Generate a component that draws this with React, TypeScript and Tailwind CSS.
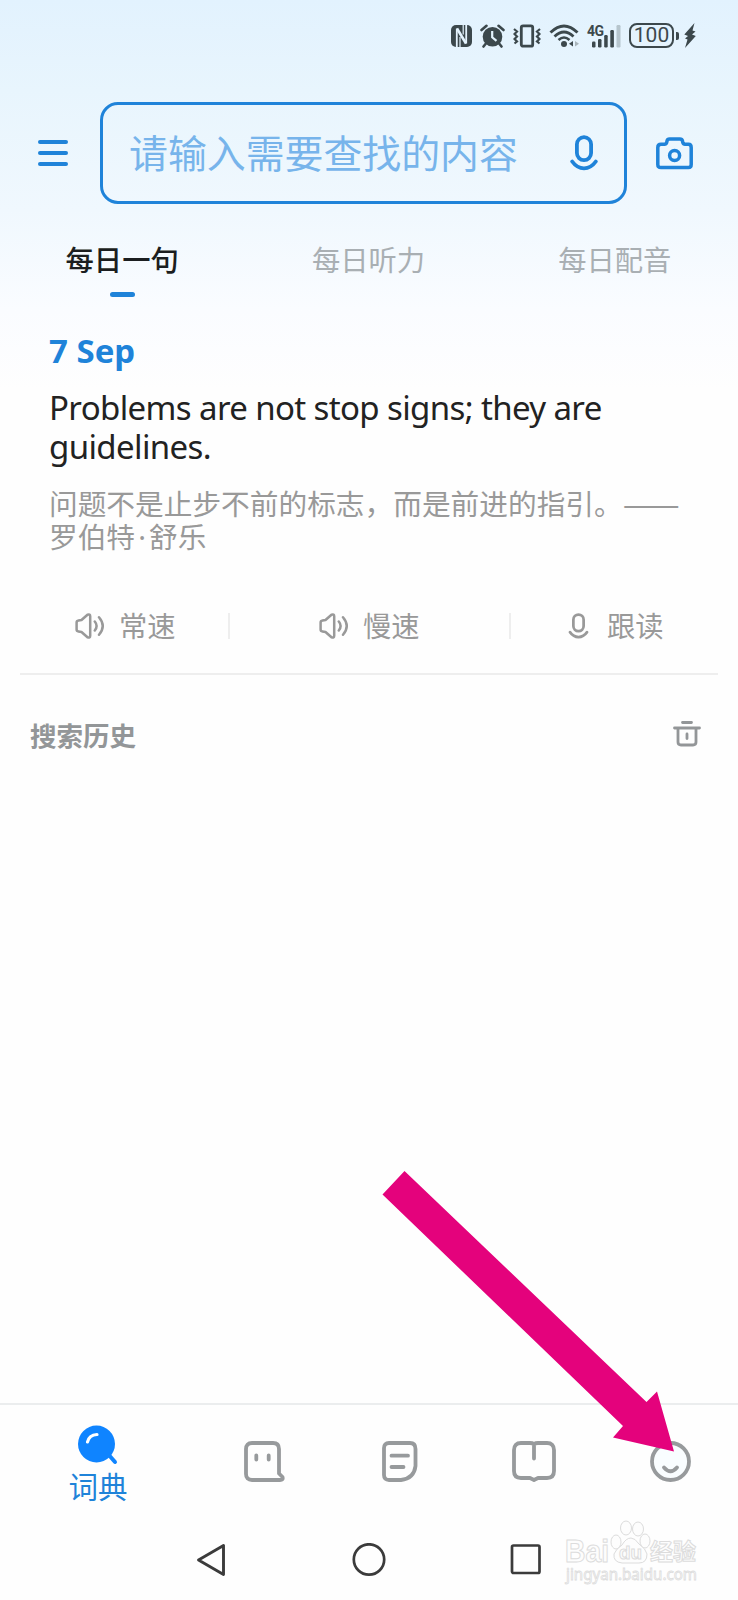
import type { ReactNode } from 'react';

interface IAction {
  label: string;
  icon: ReactNode;
  className: string;
}

function StatusBar() {
  return (
    <div className="flex h-[71px] items-center justify-end pr-[42px] text-[#3c484c]">
      <svg width="21" height="22" viewBox="0 0 21 22" fill="none">
        <rect width="21" height="22" rx="5" fill="currentColor" />
        <path d="M5.8 22V3.500M15.200 0V18.500" stroke="#e4f3fd" strokeWidth="1.800" />
        <path d="M6 3.500L15 18.500" stroke="#e4f3fd" strokeWidth="2.600" />
        <path d="M9 22V12M12.200 0V9.500" stroke="#e4f3fd" strokeWidth="1.200" />
      </svg>
      <svg className="ml-2" width="25" height="24" viewBox="0 0 25 24" fill="none">
        <circle cx="12.500" cy="12.800" r="9.800" fill="currentColor" />
        <path
          d="M1.500 6L6.500 1.800M23.500 6L18.500 1.800M5.500 20L3.500 22.500M19.500 20l2 2.500"
          stroke="currentColor"
          strokeWidth="2.600"
          strokeLinecap="round"
        />
        <path d="M12.200 7v6.300l4.300 3.600" stroke="#e4f3fd" strokeWidth="2.200" />
      </svg>
      <svg
        className="ml-2"
        width="28"
        height="24"
        viewBox="0 0 28 24"
        fill="none"
        stroke="currentColor"
      >
        <rect x="8.300" y="1.800" width="11.400" height="20.400" rx="1.800" strokeWidth="2.800" />
        <path
          d="M1 5l3 2.500-2.500 2.500L4 12.500 1.500 15 4 17.500 1.500 19.500M27 5l-3 2.500 2.500 2.500-2.500 2.500 2.500 2.500-2.500 2.500 2.500 2"
          strokeWidth="2.200"
        />
      </svg>
      <svg
        className="ml-2"
        width="31"
        height="24"
        viewBox="0 0 31 24"
        fill="none"
        stroke="currentColor"
      >
        <path d="M1.500 8.500Q15 -4.500 28.500 8.500" strokeWidth="3" />
        <path d="M5.500 12.500Q15 3.500 24.500 12.500" strokeWidth="2.800" />
        <path d="M9.500 16Q15 11 20.500 16" strokeWidth="2.600" />
        <circle cx="15" cy="20" r="3" fill="currentColor" stroke="none" />
        <path d="M24 17v5.500l-4-2.700z" fill="currentColor" stroke="none" />
        <path d="M26 17v5.500l4-2.700z" fill="#a9b5bb" stroke="none" />
      </svg>
      <div className="relative ml-[7px] h-6 w-[34px]">
        <span className="absolute top-0 left-0 font-[Roboto] text-[14px] leading-[14px] font-bold tracking-[-0.5px]">
          4G
        </span>
        <svg width="34" height="24" viewBox="0 0 34 24" fill="currentColor">
          <rect x="5" y="17.500" width="3.500" height="6" rx="1.200" />
          <rect x="11" y="15" width="3.500" height="8.500" rx="1.200" />
          <rect x="17.200" y="11" width="3.500" height="12.500" rx="1.200" />
          <rect x="23.300" y="6" width="3.600" height="17.500" rx="1.200" />
          <rect x="29.500" y="1" width="4" height="22.500" rx="1.200" fill="#b6c5cd" />
        </svg>
      </div>
      <div className="ml-2 flex h-[25px] w-[45px] items-center justify-center rounded-[8px] border-2 border-current font-[Roboto] text-[21px] leading-none">
        100
      </div>
      <div className="ml-[2px] h-[8px] w-[3px] rounded-r-[2px] bg-current" />
      <svg className="ml-[5px]" width="12" height="25" viewBox="0 0 12 25" fill="currentColor">
        <path d="M10.500 0L.3 11.500 4 13 1 15.500 3.500 16.500 1 25 11.800 13 8 11.500 11.500 8.500 8.500 7.500z" />
      </svg>
    </div>
  );
}

function MicIcon({ width, height }: { width: number; height: number }) {
  return (
    <svg
      width={width}
      height={height}
      viewBox="0 0 28 36"
      fill="none"
      stroke="currentColor"
      strokeWidth="3.800"
      strokeLinecap="round"
    >
      <rect x="6.900" y="2.200" width="14.200" height="23" rx="7.100" />
      <path d="M2.200 26.500Q7 33.300 14 33.300T25.800 26.500" />
    </svg>
  );
}

function SpeakerIcon() {
  return (
    <svg
      width="30"
      height="26"
      viewBox="0 0 30 26"
      fill="none"
      stroke="currentColor"
      strokeWidth="2.500"
      strokeLinecap="round"
      strokeLinejoin="round"
    >
      <path d="M3.500 7.500L6.500 7 12.500 1.700Q15.200.8 15.200 3.200V22.800Q15.200 25.200 12.500 24.300L6.500 19 3.500 18.500Q1.600 18.200 1.600 16.500V9.500Q1.600 7.800 3.500 7.500z" />
      <path d="M19.800 8.500q3.600 4.500 0 9M24 4.200q7.500 8.800 0 17.600" />
    </svg>
  );
}

const actions: IAction[] = [
  { label: '常速', icon: <SpeakerIcon />, className: 'w-[228px] pl-[75px]' },
  {
    label: '慢速',
    icon: <SpeakerIcon />,
    className: 'w-[281px] border-l-2 border-[#eeeeee] pl-[89px]',
  },
  {
    label: '跟读',
    icon: (
      <div className="w-[25px]">
        <MicIcon width={21} height={26} />
      </div>
    ),
    className: 'w-[229px] border-l-2 border-[#eeeeee] pl-[57px]',
  },
];

function SearchRow() {
  return (
    <div className="mt-[31px] flex h-[102px] items-center pl-[38px] text-[#1f83d9]">
      <div className="flex w-[30px] flex-col gap-[7px]">
        <div className="h-[4px] rounded-full bg-current" />
        <div className="h-[4px] rounded-full bg-current" />
        <div className="h-[4px] rounded-full bg-current" />
      </div>
      <div className="ml-8 flex h-[102px] w-[527px] items-center justify-between rounded-[18px] border-[3px] border-current pr-[26px] pl-[26px]">
        <span className="text-[38.900px] leading-[50px] whitespace-nowrap text-[#77b4eb]">
          请输入需要查找的内容
        </span>
        <MicIcon width={28} height={36} />
      </div>
      <svg
        className="ml-[29px]"
        width="38"
        height="33"
        viewBox="0 0 38 33"
        fill="none"
        stroke="currentColor"
        strokeWidth="3.500"
        strokeLinejoin="round"
      >
        <path d="M5 7.200H8.500Q10.200 7.200 10.700 5.500L11 4Q11.500 2 13.500 2H24Q26 2 26.500 4L26.800 5.500Q27.300 7.200 29 7.200H32.500Q35.200 7.200 35.200 10.500V27.500Q35.200 30.500 32.500 30.500H5Q1.800 30.500 1.800 27.500V10.500Q1.800 7.200 5 7.200z" />
        <circle cx="18.600" cy="18.500" r="5" />
      </svg>
    </div>
  );
}

function TabBar() {
  return (
    <div className="flex h-[96px] items-start border-t-2 border-[#ebedee] pl-[68px] text-[#979a9c]">
      <div className="flex w-[60px] flex-col items-center pt-[20px] text-[#1f83d9]">
        <svg width="40" height="41" viewBox="0 0 40 41" fill="none" strokeLinecap="round">
          <path d="M30 29l7 8" stroke="#0f84ff" strokeWidth="4" />
          <circle cx="18.500" cy="19" r="18.500" fill="#0f84ff" />
          <path d="M9.500 17Q11 10 19 9.500" stroke="#fff" strokeWidth="3.200" />
        </svg>
        <span className="text-[29.500px] leading-[42px] whitespace-nowrap">词典</span>
      </div>
      <svg
        className="mt-[36px] ml-[116px]"
        width="41"
        height="41"
        viewBox="0 0 41 41"
        fill="none"
        stroke="currentColor"
        strokeWidth="3.800"
        strokeLinecap="round"
        strokeLinejoin="round"
      >
        <path d="M8 2H29Q35 2 35 8V32.500L38.500 36Q39.500 39 36 39H8Q2 39 2 33V8Q2 2 8 2z" />
        <path d="M12.300 14.500v4M24.700 14.500v4" />
      </svg>
      <svg
        className="mt-[36px] ml-[97px]"
        width="36"
        height="41"
        viewBox="0 0 36 41"
        fill="none"
        stroke="currentColor"
        strokeWidth="3.800"
        strokeLinecap="round"
      >
        <path d="M7 2H28Q33.500 2 33.500 8V25Q32 37.500 19 39H7Q2 39 2 34V7Q2 2 7 2z" />
        <path d="M9.500 14.700H26M9.500 26H21.500" />
      </svg>
      <svg
        className="mt-[36px] ml-[94px]"
        width="44"
        height="41"
        viewBox="0 0 44 41"
        fill="none"
        stroke="currentColor"
        strokeWidth="3.800"
        strokeLinecap="round"
        strokeLinejoin="round"
      >
        <path d="M22 3Q20.500 2 18 2H9Q2 2 2 9V30Q2 37 9 37H18L22 39 26 37H35Q42 37 42 30V9Q42 2 35 2H26Q23.500 2 22 3zV17.500" />
      </svg>
      <svg
        className="mt-[36px] ml-[94px]"
        width="41"
        height="41"
        viewBox="0 0 41 41"
        fill="none"
        stroke="currentColor"
        strokeWidth="3.800"
        strokeLinecap="round"
      >
        <circle cx="20.500" cy="20.500" r="18.500" fill="#f9fdff" />
        <path d="M14 26.500q6.500 7.500 13 0" />
      </svg>
    </div>
  );
}

function Watermark() {
  return (
    <svg
      className="absolute top-[1515px] left-[562px] overflow-visible"
      width="140"
      height="76"
      viewBox="0 0 140 76"
      fill="#fdfdfd"
      stroke="#dcdcdc"
      strokeWidth="1"
    >
      <g fontFamily="Liberation Sans" fontWeight="700">
        <text x="3" y="47" fontSize="31" textLength="44" lengthAdjust="spacingAndGlyphs">
          Bai
        </text>
        <ellipse cx="54" cy="27" rx="5" ry="7" />
        <ellipse cx="64" cy="13" rx="5.500" ry="7" />
        <ellipse cx="76" cy="14" rx="5.500" ry="7" />
        <ellipse cx="83" cy="26" rx="5" ry="7" />
        <path d="M69 23Q73 23 77 29 84 34 85 39 85 48 77 48H60Q51 47 52 39 54 34 60 30 64 23 69 23z" />
        <text x="57" y="44" fontSize="19" textLength="23" lengthAdjust="spacingAndGlyphs">
          du
        </text>
        <text x="88" y="45" fontSize="23" fontFamily="Noto Sans CJK SC">
          经验
        </text>
      </g>
      <text
        x="4"
        y="65"
        fontSize="16"
        fontFamily="Noto Sans"
        strokeWidth="0.800"
        textLength="131"
        lengthAdjust="spacingAndGlyphs"
      >
        jingyan.baidu.com
      </text>
    </svg>
  );
}

export default function App() {
  return (
    <main className="relative flex h-[1600px] w-[738px] flex-col overflow-hidden bg-[#fefefe] bg-[linear-gradient(180deg,#e2f2fe_0px,#e8f5fd_90px,#f0f8fe_210px,#fafcff_310px,#fefefe_390px)] font-['Noto_Sans','Noto_Sans_CJK_SC',sans-serif]">
      <StatusBar />
      <SearchRow />

      <div className="mt-[35px] -ml-px grid h-[58px] grid-cols-3 text-center text-[28.300px] leading-[42px] text-[#a9afb3]">
        <div className="flex flex-col items-center font-medium text-[#1b1e20]">
          每日一句
          <div className="mt-[11px] h-[5px] w-[25px] shrink-0 rounded-full bg-[#1f83d9]" />
        </div>
        <div>每日听力</div>
        <div>每日配音</div>
      </div>

      <section className="px-[49px]">
        <h2 className="mt-[34px] text-[33px] leading-[40px] font-bold text-[#1f83d9]">7 Sep</h2>
        <p className="mt-[17px] text-[33px] leading-[39px] tracking-[-0.620px] text-[#222]">
          <span className="whitespace-nowrap">Problems are not stop signs; they are</span>
          <br />
          guidelines.
        </p>
        <div className="mt-[20px] text-[28.700px] leading-[33.500px] whitespace-nowrap text-[#999]">
          <p className="flex h-[33.500px] font-['Noto_Sans_CJK_SC',sans-serif]">
            问题不是止步不前的标志，而是前进的指引。
            <span className="text-[34px]">——</span>
          </p>
          <p>
            罗伯特<span className="inline-block w-[14px] text-center">·</span>舒乐
          </p>
        </div>
      </section>

      <div className="mt-[60px] flex h-[26px] text-[#999]">
        {actions.map((action) => (
          <div key={action.label} className={`flex items-center ${action.className}`}>
            {action.icon}
            <span className="ml-[14px] text-[28.300px] leading-[26px]">{action.label}</span>
          </div>
        ))}
      </div>

      <div className="mx-5 mt-[34px] h-[2px] shrink-0 bg-[#eeeeee]" />

      <div className="mt-[41px] flex h-10 items-center justify-between pr-[37px] pl-[30px] text-[#939698]">
        <span className="text-[26.500px] leading-10 font-bold">搜索历史</span>
        <svg
          className="-mt-[5px]"
          width="28"
          height="26"
          viewBox="0 0 28 26"
          fill="none"
          stroke="currentColor"
          strokeWidth="2.800"
          strokeLinecap="round"
        >
          <path d="M9.500 1.500h9M1.500 7h25M5 7.500V21q0 3 3 3H20q3 0 3-3V7.500M14 13v4.500" />
        </svg>
      </div>

      <div className="flex-1" />

      <TabBar />

      <div className="flex h-[101px] items-start pt-[44px] pl-[196px] text-[#3b3b3b]">
        <svg width="30" height="34" viewBox="0 0 30 34" fill="none" stroke="currentColor">
          <path d="M27.500 2.500v29L2.500 17z" strokeWidth="2.900" strokeLinejoin="round" />
        </svg>
        <svg
          className="ml-[126px]"
          width="34"
          height="34"
          viewBox="0 0 34 34"
          fill="none"
          stroke="currentColor"
          strokeWidth="2.700"
        >
          <circle cx="17" cy="16.500" r="15.200" />
        </svg>
        <svg
          className="ml-[124px]"
          width="32"
          height="34"
          viewBox="0 0 32 34"
          fill="none"
          stroke="currentColor"
          strokeWidth="2.700"
        >
          <rect x="2" y="2.500" width="27.500" height="27.500" rx="1.500" />
        </svg>
      </div>

      <svg
        className="absolute top-[1170px] left-[381px]"
        width="295"
        height="284"
        viewBox="0 0 295 284"
      >
        <path
          d="M23.500 1L265.500 232 276 221.500 293 281.500 232 267.500 242 256 1.500 24.500z"
          fill="#e4027c"
        />
      </svg>

      <Watermark />
    </main>
  );
}
